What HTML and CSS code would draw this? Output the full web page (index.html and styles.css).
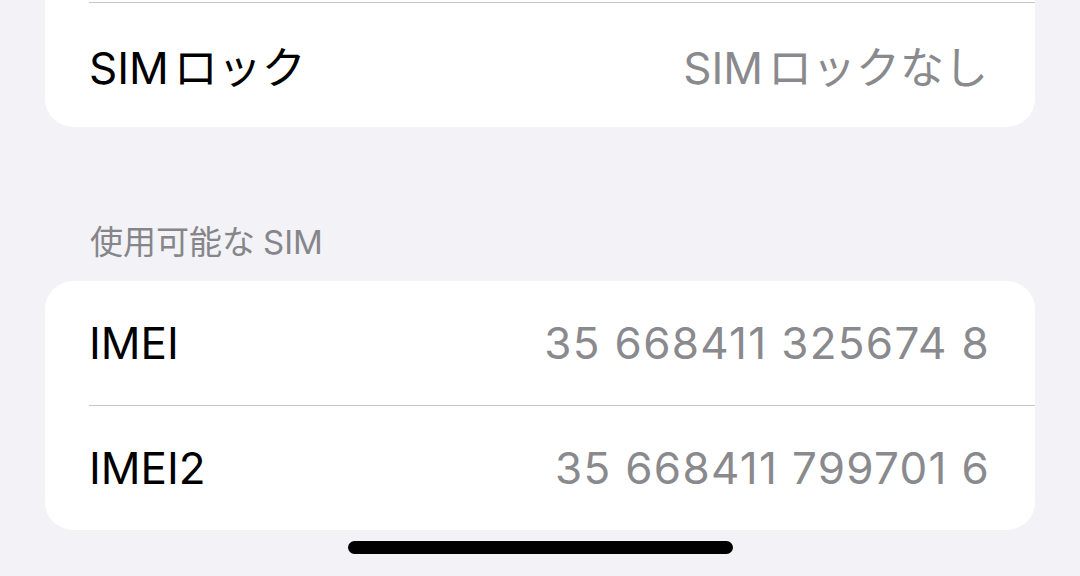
FILE: index.html
```html
<!DOCTYPE html>
<html lang="ja">
<head>
    <meta charset="UTF-8">
    <meta name="viewport" content="width=device-width, initial-scale=1.0">
    <title>情報</title>
    <link rel="stylesheet" href="styles.css">
</head>
<body class="background">
    <div class="settingsList">
        <div class="group groupTop">
            <div class="row rowDivided">
                <span class="rowLabel"><span class="latinWord">SIM</span>ロック</span>
                <span class="rowValue"><span class="latinWord">SIM</span>ロックなし</span>
            </div>
        </div>

        <p class="groupHeader">使用可能な<span class="latinAfter">SIM</span></p>
        <div class="group">
            <div class="row">
                <span class="rowLabel">IMEI</span>
                <span class="rowValue digits">35 668411 325674 8</span>
            </div>
            <div class="row rowDivided">
                <span class="rowLabel">IMEI2</span>
                <span class="rowValue digits">35 668411 799701 6</span>
            </div>
        </div>
    </div>

    <div class="homeIndicator"></div>
</body>
</html>
```

FILE: styles.css
```css
*{
    box-sizing: border-box;
}

.background{
    margin: 0;
    height: 576px;
    overflow: hidden;
    background-color: #f2f2f7;
    font-family: Inter, "Noto Sans CJK JP", sans-serif;
}

.settingsList{
    display: flex;
    flex-direction: column;
    padding: 0 45px;
}

.group{
    background: #ffffff;
    border-radius: 28px;
    overflow: hidden;
}

/* the rows above this one are scrolled out of view */
.groupTop{
    margin-top: -40px;
    padding-top: 42px;
}

.row{
    display: flex;
    flex-direction: row;
    align-items: center;
    justify-content: space-between;
    height: 124px;
    margin-left: 44px;
    padding-right: 47px;
}

.rowDivided{
    border-top: 1px solid #c6c6c8;
    height: 125px;
}

.rowLabel{
    font-size: 44px;
    color: #000000;
}

.rowValue{
    font-size: 44px;
    color: #8a8a8e;
}

.digits{
    letter-spacing: 1.3px;
    margin-right: -2px;
}

/* small gap where latin letters meet kana */
.latinWord{
    margin-right: 5px;
}

.latinAfter{
    margin-left: 8px;
}

.groupHeader{
    margin: 0;
    padding: 94px 0 18px 45px;
    font-size: 33px;
    line-height: 42px;
    color: #86868a;
}

.homeIndicator{
    width: 385px;
    height: 13px;
    margin: 11px auto 0;
    border-radius: 7px;
    background: #000000;
}
```
